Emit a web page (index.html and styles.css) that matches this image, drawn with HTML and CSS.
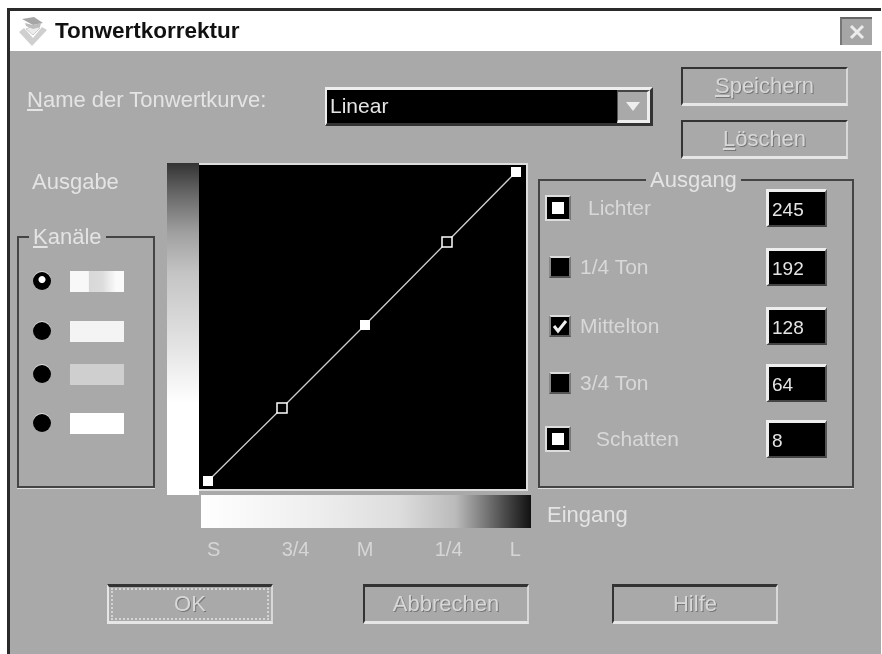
FILE: index.html
```html
<!DOCTYPE html>

<html>
<head>
	<meta charset="utf-8" />
	<title>Tonwertkorrektur</title>
	<link rel="stylesheet" href="styles.css">
</head>

<body>
	<div class="dialog">
		<div class="titlebar">
			<svg class="app-icon" width="30" height="32" viewBox="0 0 30 32">
				<path d="M1 17 L14 31 L29 15 L24 12 L15 23 L6 13 Z" fill="#cfcfcf" />
				<path d="M8 14 L15 20 L22 13 L15 11 Z" fill="#ececec" stroke="#cdcdcd" />
				<path d="M4 4 L16 2 L25 8 L15 10 Z" fill="#a6a6a6" />
				<path d="M7 8 L15 10 L23 8 L22 12 L15 14 L8 11 Z" fill="#bdbdbd" />
			</svg>
			<span class="title-text">Tonwertkorrektur</span>
			<div class="close-btn">
				<svg width="20" height="20" viewBox="0 0 20 20">
					<path d="M4 4 L16 16 M16 4 L4 16" stroke="#ececec" stroke-width="3" />
				</svg>
			</div>
		</div>

		<div class="panel">
			<div class="top-row">
				<div class="curve-label"><u>N</u>ame der Tonwertkurve:</div>
				<div class="combo">
					<span class="combo-value">Linear</span>
					<div class="combo-arrow"></div>
				</div>
				<div class="side-buttons">
					<div class="btn"><span><u>S</u>peichern</span></div>
					<div class="btn"><span><u>L</u>öschen</span></div>
				</div>
			</div>

			<div class="main-row">
				<div class="left-col">
					<div class="output-label">Ausgabe</div>
					<fieldset class="group channels">
						<legend><u>K</u>anäle</legend>
						<div class="channel-list">
							<div class="channel"><i class="radio selected"></i><i class="swatch swatch-rgb"></i></div>
							<div class="channel"><i class="radio"></i><i class="swatch swatch-r"></i></div>
							<div class="channel"><i class="radio"></i><i class="swatch swatch-g"></i></div>
							<div class="channel"><i class="radio"></i><i class="swatch swatch-b"></i></div>
						</div>
					</fieldset>
				</div>

				<div class="output-ramp"></div>

				<div class="plot">
					<svg width="327" height="324" viewBox="0 0 327 324">
						<path d="M9 316 L83 243 L166 160 L248 77 L317 7" fill="none" stroke="#d0d0d0" stroke-width="1.3" />
						<rect class="pt" x="4" y="311" width="10" height="10" />
						<rect class="pt-open" x="78" y="238" width="10" height="10" />
						<rect class="pt" x="161" y="155" width="10" height="10" />
						<rect class="pt-open" x="243" y="72" width="10" height="10" />
						<rect class="pt" x="312" y="2" width="10" height="10" />
					</svg>
				</div>

				<fieldset class="group levels">
					<legend>Ausgang</legend>
					<div class="level-list">
						<div class="level">
							<i class="check big"><b></b></i>
							<span class="level-name name-lichter">Lichter</span>
							<div class="level-value">245</div>
						</div>
						<div class="level">
							<i class="check"></i>
							<span class="level-name">1/4 Ton</span>
							<div class="level-value">192</div>
						</div>
						<div class="level">
							<i class="check">
								<svg width="18" height="18" viewBox="0 0 18 18"><path d="M3 9 L7 14 L15 4" fill="none" stroke="#eee" stroke-width="3" /></svg>
							</i>
							<span class="level-name">Mittelton</span>
							<div class="level-value">128</div>
						</div>
						<div class="level">
							<i class="check"></i>
							<span class="level-name">3/4 Ton</span>
							<div class="level-value">64</div>
						</div>
						<div class="level">
							<i class="check big"><b></b></i>
							<span class="level-name name-schatten">Schatten</span>
							<div class="level-value">8</div>
						</div>
					</div>
				</fieldset>
			</div>

			<div class="input-row">
				<div class="input-ramp"></div>
				<div class="input-label">Eingang</div>
			</div>

			<div class="ticks">
				<span>S</span><span>3/4</span><span>M</span><span>1/4</span><span>L</span>
			</div>

			<div class="bottom-row">
				<div class="btn btn-default"><span>OK</span></div>
				<div class="btn"><span>Abbrechen</span></div>
				<div class="btn"><span>Hilfe</span></div>
			</div>
		</div>
	</div>
</body>

</html>
```
FILE: styles.css
```css
* {
	margin: 0;
	padding: 0;
	box-sizing: border-box;
}

html, body {
	height: 100%;
	overflow: hidden;
}

body {
	background-color: white;
	font-family: "Liberation Sans", sans-serif;
	font-size: 22px;
	color: #e4e4e4;
}

i {
	display: block;
}

.dialog {
	display: flex;
	flex-direction: column;
	width: 874px;
	height: 646px;
	margin: 8px 0 0 7px;
	border-top: 3px solid #2a2a2a;
	border-left: 3px solid #2a2a2a;
	filter: blur(0.7px);
}

/* Title bar */

.titlebar {
	display: flex;
	align-items: center;
	height: 40px;
	padding: 0 9px 0 8px;
	background-color: white;
}

.app-icon {
	margin-right: 7px;
}

.title-text {
	flex: 1;
	font-size: 22.5px;
	font-weight: bold;
	color: #111;
}

.close-btn {
	display: flex;
	align-items: center;
	justify-content: center;
	width: 32px;
	height: 28px;
	background-color: #a6a6a6;
	border-top: 2px solid #666;
	border-left: 2px solid #777;
}

/* Main panel */

.panel {
	flex: 1;
	background-color: #a9a9a9;
}

.top-row {
	display: grid;
	grid-template-columns: 298px 328px 167px;
	padding: 16px 0 0 17px;
	height: 112px;
}

.curve-label {
	margin-top: 20px;
	white-space: nowrap;
}

.combo {
	display: flex;
	justify-content: space-between;
	height: 39px;
	margin-top: 20px;
	background-color: black;
	border-top: 3px solid #eee;
	border-left: 2px solid #eee;
	border-bottom: 3px solid #333;
	border-right: 3px solid #333;
}

.combo-value {
	padding: 4px 0 0 3px;
	font-size: 21px;
}

.combo-arrow {
	position: relative;
	width: 33px;
	background-color: #a9a9a9;
	border-right: 3px solid #eee;
	border-bottom: 3px solid #eee;
	border-top: 2px solid #444;
	border-left: 1px solid #555;
}

.combo-arrow::after {
	content: ' ';
	position: absolute;
	top: 10px;
	left: 8px;
	border-top: 9px solid #eee;
	border-left: 7px solid transparent;
	border-right: 7px solid transparent;
}

.side-buttons {
	display: flex;
	flex-direction: column;
	gap: 14px;
	margin-left: 28px;
	width: 167px;
}

.btn {
	display: flex;
	align-items: center;
	justify-content: center;
	height: 39px;
	border-top: 2px solid #333;
	border-left: 2px solid #333;
	border-bottom: 3px solid #e6e6e6;
	border-right: 2px solid #d8d8d8;
	color: #d8d8d8;
	text-shadow: 1px 1px 0 #777;
}

/* Curve + groups */

.main-row {
	display: flex;
	height: 332px;
	margin-left: 7px;
}

.left-col {
	width: 150px;
}

.output-label {
	padding: 6px 0 0 15px;
	height: 62px;
}

.group {
	border: 2px solid #444;
	box-shadow: 0 1px 0 #ddd;
}

.group legend {
	padding: 0 4px;
	line-height: 23px;
}

.channels {
	width: 138px;
	height: 263px;
}

.channels legend {
	margin-left: 10px;
}

.channel-list {
	display: grid;
	grid-template-rows: 50px 50px 36px 62px;
	padding: 8px 0 0 14px;
}

.channel {
	display: flex;
	align-items: center;
	gap: 19px;
}

.radio {
	width: 18px;
	height: 18px;
	border-radius: 50%;
	background-color: black;
	box-shadow: 0 -1px 0 #ddd;
}

.radio.selected {
	background: radial-gradient(circle at 50% 42%, white 0 3px, black 4px);
}

.swatch {
	width: 54px;
	height: 21px;
}

.swatch-rgb {
	background: linear-gradient(to right, #f8f8f8 34%, #d8d8d8 36%, #dcdcdc 60%, #fafafa 85%);
}

.swatch-r {
	background-color: #f4f4f4;
}

.swatch-g {
	background-color: #cfcfcf;
}

.swatch-b {
	background-color: white;
}

.output-ramp {
	width: 32px;
	height: 332px;
	background: linear-gradient(to bottom, #333 0, #666 30px, #a0a0a0 70px, #c4c4c4 110px, #e2e2e2 180px, white 240px);
}

.plot {
	width: 329px;
	height: 328px;
	background-color: black;
	border-top: 2px solid #ddd;
	border-right: 2px solid #ddd;
	border-bottom: 2px solid #ddd;
}

.plot svg {
	display: block;
}

.pt {
	fill: white;
}

.pt-open {
	fill: black;
	stroke: white;
	stroke-width: 1.5;
}

.levels {
	width: 316px;
	height: 320px;
	margin: 5px 0 0 10px;
}

.levels legend {
	margin-left: 106px;
}

.level-list {
	display: grid;
	grid-template-rows: 59px 59px 59px 56px 56px;
	margin-top: -13px;
	padding: 0 0 0 7px;
}

.level {
	display: grid;
	grid-template-columns: 24px 1fr 61px;
	align-items: center;
	padding-right: 25px;
}

.level-name {
	padding-left: 9px;
	font-size: 21px;
	color: #d8d8d8;
}

.name-lichter {
	padding-left: 17px;
}

.name-schatten {
	padding-left: 25px;
}

.check {
	justify-self: end;
	width: 22px;
	height: 22px;
	background-color: black;
	border-top: 2px solid #ddd;
	border-left: 2px solid #888;
	border-bottom: 2px solid #555;
	border-right: 2px solid #777;
}

.check svg {
	display: block;
}

.check.big {
	display: flex;
	align-items: center;
	justify-content: center;
	width: 26px;
	height: 26px;
	margin-left: -2px;
	border-left-color: #ddd;
	border-bottom-color: #ddd;
}

.check.big b {
	width: 12px;
	height: 12px;
	background-color: white;
}

.level-value {
	height: 38px;
	padding: 7px 0 0 3px;
	background-color: black;
	border-top: 3px solid #eee;
	border-left: 3px solid #eee;
	border-bottom: 2px solid #444;
	border-right: 2px solid #555;
	font-size: 19px;
}

/* Input ramp, ticks, buttons */

.input-row {
	display: flex;
	margin-left: 191px;
}

.input-ramp {
	width: 330px;
	height: 33px;
	background: linear-gradient(to right, white 0, #eee 35%, #ddd 60%, #bbb 77%, #888 84%, #444 93%, #111 100%);
}

.input-label {
	margin: 7px 0 0 16px;
}

.ticks {
	display: flex;
	justify-content: space-between;
	width: 314px;
	height: 46px;
	margin: 10px 0 0 197px;
	font-size: 20px;
	color: #d6d6d6;
}

.ticks span:nth-child(even) {
	padding-left: 14px;
}

.bottom-row {
	display: grid;
	grid-template-columns: 256px 249px 166px;
	padding-left: 97px;
}

.bottom-row .btn {
	width: 166px;
	height: 40px;
	border-top-width: 3px;
}

.bottom-row .btn-default {
	border-left-color: #e6e6e6;
	outline: 2px dotted #d4d4d4;
	outline-offset: -6px;
}
```
